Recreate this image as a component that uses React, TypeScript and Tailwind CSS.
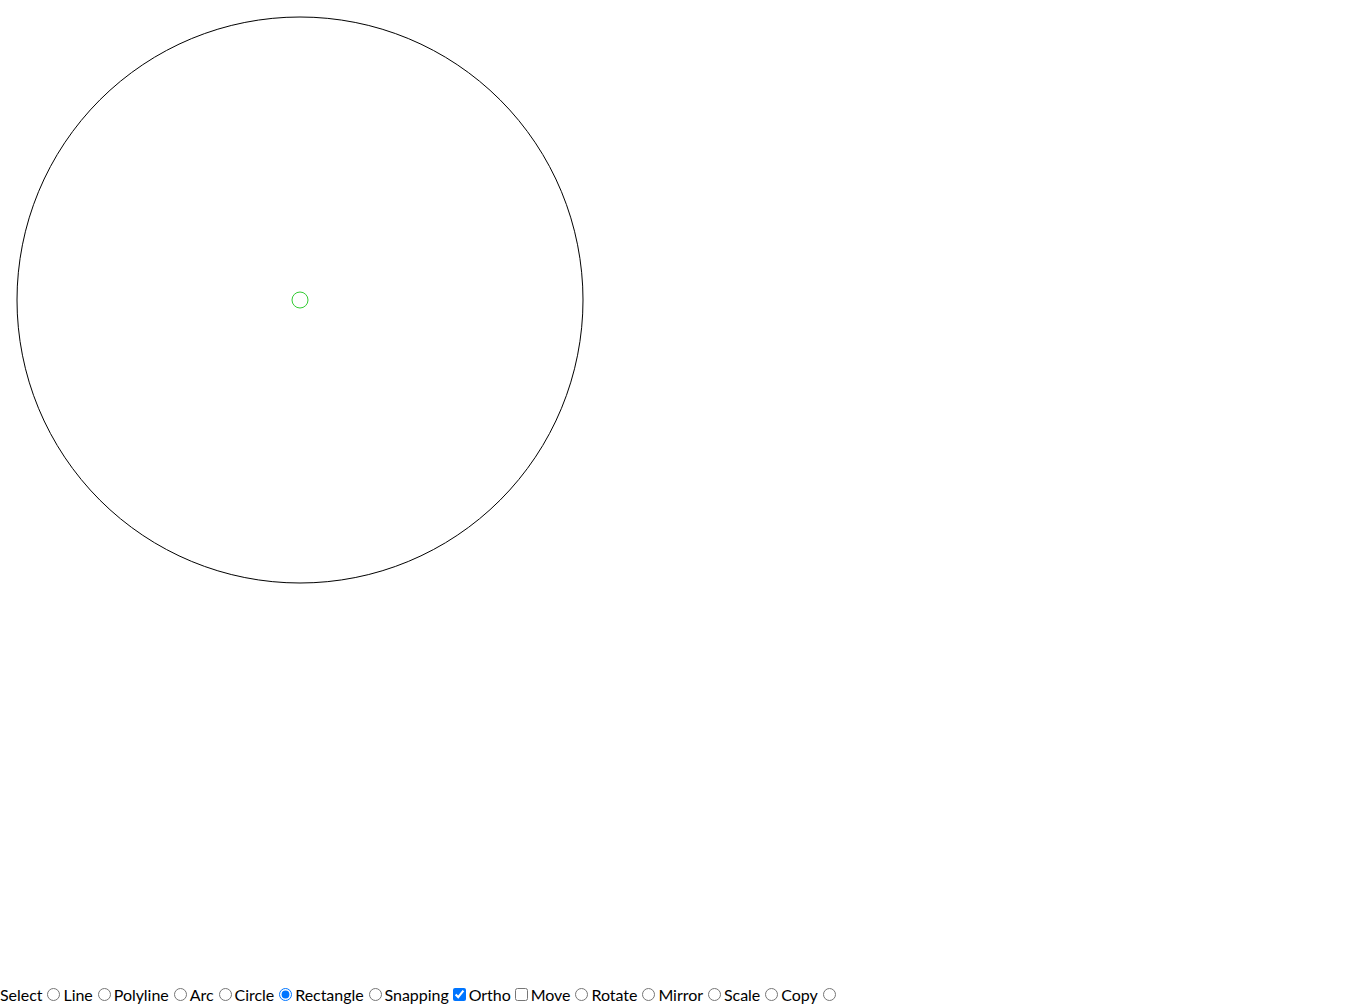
import { useState } from "react";

const tools = ["Select", "Line", "Polyline", "Arc", "Circle", "Rectangle"];
const modes = ["Move", "Rotate", "Mirror", "Scale", "Copy"];

export default function App() {
  const [tool, setTool] = useState("Circle");
  const [snap, setSnap] = useState(true);
  const [ortho, setOrtho] = useState(false);
  const [mode, setMode] = useState("");

  return (
    <div className="w-[1366px] h-[1005px] bg-white text-black font-['Segoe_UI','Lato',sans-serif] text-[16px] overflow-hidden">
      {/* drawing canvas */}
      <svg width={1366} height={984} className="block">
        <circle cx={300} cy={300} r={283} fill="none" stroke="#000" strokeWidth={1} />
        <circle cx={300} cy={300} r={8} fill="none" stroke="#33cc33" strokeWidth={1} />
      </svg>

      {/* toolbar */}
      <div className="flex items-center h-[21px] leading-[21px] whitespace-nowrap tracking-[-0.04px]">
        {tools.map((t) => (
          <label key={t} className="flex items-center">
            {t}
            <input
              type="radio"
              name="tool"
              checked={tool === t}
              onChange={() => setTool(t)}
              className="w-[13px] h-[13px] ml-[5px] mr-[3px] accent-[#0075ff]"
            />
          </label>
        ))}
        <label className="flex items-center">
          Snapping
          <input
            type="checkbox"
            checked={snap}
            onChange={() => setSnap(!snap)}
            className="w-[13px] h-[13px] ml-[4px] mr-[3px] accent-[#0075ff]"
          />
        </label>
        <label className="flex items-center">
          Ortho
          <input
            type="checkbox"
            checked={ortho}
            onChange={() => setOrtho(!ortho)}
            className="w-[13px] h-[13px] ml-[4px] mr-[3px] accent-[#0075ff]"
          />
        </label>
        {modes.map((m) => (
          <label key={m} className="flex items-center">
            {m}
            <input
              type="radio"
              name="mode"
              checked={mode === m}
              onChange={() => setMode(m)}
              className="w-[13px] h-[13px] ml-[5px] mr-[3px] accent-[#0075ff]"
            />
          </label>
        ))}
      </div>
    </div>
  );
}
